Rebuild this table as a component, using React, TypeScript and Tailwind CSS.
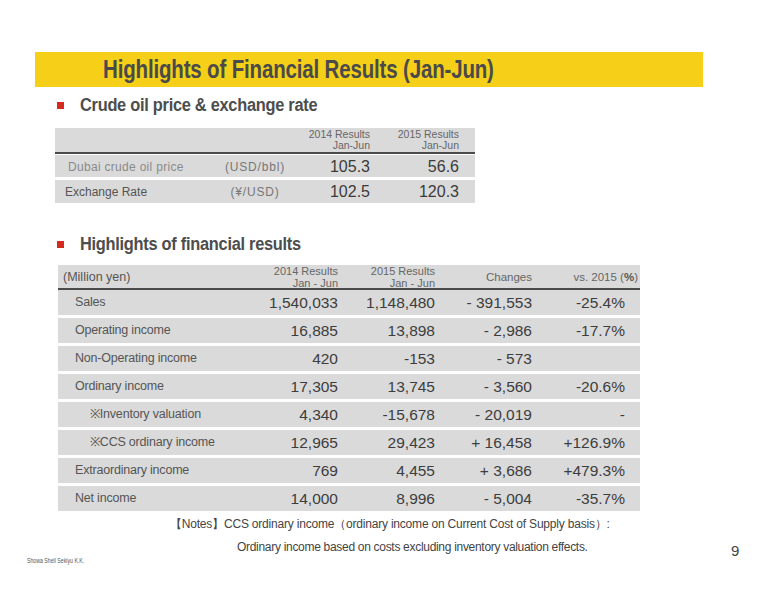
import React from "react";

const font = { fontFamily: '"Liberation Sans", Arial, sans-serif' };

type Row = { label: string; indent?: boolean; v: [string, string, string, string] };

const rows: Row[] = [
  { label: "Sales", v: ["1,540,033", "1,148,480", "- 391,553", "-25.4%"] },
  { label: "Operating income", v: ["16,885", "13,898", "- 2,986", "-17.7%"] },
  { label: "Non-Operating income", v: ["420", "-153", "- 573", ""] },
  { label: "Ordinary income", v: ["17,305", "13,745", "- 3,560", "-20.6%"] },
  { label: "※Inventory valuation", indent: true, v: ["4,340", "-15,678", "- 20,019", "-"] },
  { label: "※CCS ordinary income", indent: true, v: ["12,965", "29,423", "+ 16,458", "+126.9%"] },
  { label: "Extraordinary income", v: ["769", "4,455", "+ 3,686", "+479.3%"] },
  { label: "Net income", v: ["14,000", "8,996", "- 5,004", "-35.7%"] },
];

function Heading({ children }: { children: React.ReactNode }) {
  return (
    <div className="flex items-center h-[20px]">
      <div className="ml-[57px] w-[7px] h-[7px] bg-[#d52b1e]" />
      <div className="ml-[16px] text-[18px] font-bold text-[#4d4d4d] tracking-[-0.3px] origin-left scale-x-[0.91] whitespace-nowrap">
        {children}
      </div>
    </div>
  );
}

export default function App() {
  return (
    <div className="relative w-[776px] h-[600px] bg-white overflow-hidden" style={font}>
      <div className="pt-[52px]">
        <div className="ml-[35px] w-[668px] h-[35px] bg-[#f5cf18] flex items-center">
          <div className="ml-[68px] text-[25px] font-bold text-[#4a4a4a] whitespace-nowrap origin-left scale-x-[0.82] tracking-[-0.2px]">
            Highlights of Financial Results (Jan-Jun)
          </div>
        </div>

        <div className="mt-[8px]">
          <Heading>Crude oil price &amp; exchange rate</Heading>
        </div>

        {/* Table 1 */}
        <div className="ml-[55px] mt-[13px] w-[420px]">
          <div className="grid grid-cols-[155px_90px_70px_89px_16px] h-[24px] bg-[#dadada] text-[10.5px] leading-[11px] text-[#666] pt-[1px]">
            <div />
            <div />
            <div className="text-right whitespace-nowrap">
              2014 Results
              <br />
              Jan-Jun
            </div>
            <div className="text-right whitespace-nowrap">
              2015 Results
              <br />
              Jan-Jun
            </div>
            <div />
          </div>
          <div className="h-[2px] bg-[#4a4a4a]" />
          <div className="mt-[1px] grid grid-cols-[155px_90px_70px_89px_16px] h-[22px] bg-[#dadada] items-center">
            <div className="pl-[13px] text-[12px] text-[#8a8a8a] tracking-[0.3px] whitespace-nowrap">Dubai crude oil price</div>
            <div className="text-center text-[12px] text-[#777] tracking-[0.8px] whitespace-nowrap">(USD/bbl)</div>
            <div className="text-right text-[16px] text-[#3a3a3a]">105.3</div>
            <div className="text-right text-[16px] text-[#3a3a3a]">56.6</div>
            <div />
          </div>
          <div className="mt-[3px] grid grid-cols-[155px_90px_70px_89px_16px] h-[23px] bg-[#dadada] items-center">
            <div className="pl-[10px] text-[12px] text-[#555] whitespace-nowrap">Exchange Rate</div>
            <div className="text-center text-[12px] text-[#777] tracking-[0.8px] whitespace-nowrap">(¥/USD)</div>
            <div className="text-right text-[16px] text-[#3a3a3a]">102.5</div>
            <div className="text-right text-[16px] text-[#3a3a3a]">120.3</div>
            <div />
          </div>
        </div>

        <div className="mt-[31px]">
          <Heading>Highlights of financial results</Heading>
        </div>

        {/* Table 2 */}
        <div className="ml-[58px] mt-[11px] w-[582px]">
          <div className="grid grid-cols-[182px_98px_97px_97px_108px] h-[23px] bg-[#dadada] text-[#666]">
            <div className="pl-[5px] pt-[3px] text-[12.5px] text-[#555] whitespace-nowrap">(Million yen)</div>
            <div className="text-right text-[11px] leading-[12px] whitespace-nowrap">
              2014 Results
              <br />
              Jan - Jun
            </div>
            <div className="text-right text-[11px] leading-[12px] whitespace-nowrap">
              2015 Results
              <br />
              Jan - Jun
            </div>
            <div className="text-right text-[11.5px] pt-[4px] whitespace-nowrap">Changes</div>
            <div className="text-right text-[11.5px] pt-[4px] pr-[2px] whitespace-nowrap">
              vs. 2015 (<span className="font-bold text-[#555]">%</span>)
            </div>
          </div>
          <div className="h-[2px] bg-[#4a4a4a]" />
          {rows.map((r, i) => (
            <div
              key={r.label}
              className={`grid grid-cols-[182px_98px_97px_97px_93px_15px] h-[25px] bg-[#dadada] items-center ${i === 0 ? "" : "mt-[3px]"}`}
            >
              <div className={`${r.indent ? "pl-[32px]" : "pl-[17px]"} text-[12.5px] text-[#555] whitespace-nowrap tracking-[-0.2px]`}>
                {r.label}
              </div>
              {r.v.map((x, j) => (
                <div key={j} className="text-right text-[15.5px] text-[#3d3d3d] whitespace-nowrap">
                  {x}
                </div>
              ))}
              <div />
            </div>
          ))}
        </div>

        {/* Notes */}
        <div className="mt-[2px] ml-[170px] text-[12px] text-[#444] leading-[23px] tracking-[-0.2px] whitespace-nowrap">
          <div>【Notes】CCS ordinary income（ordinary income on Current Cost of Supply basis）:</div>
          <div className="ml-[67px] tracking-[-0.3px]">Ordinary income based on costs excluding inventory valuation effects.</div>
        </div>
      </div>

      <div className="absolute left-[27px] top-[555px] text-[8px] text-[#555] whitespace-nowrap origin-left scale-x-[0.65]">
        Showa Shell Sekiyu K.K.
      </div>
      <div className="absolute left-[731px] top-[540px] text-[15px] text-[#444]">9</div>
    </div>
  );
}
